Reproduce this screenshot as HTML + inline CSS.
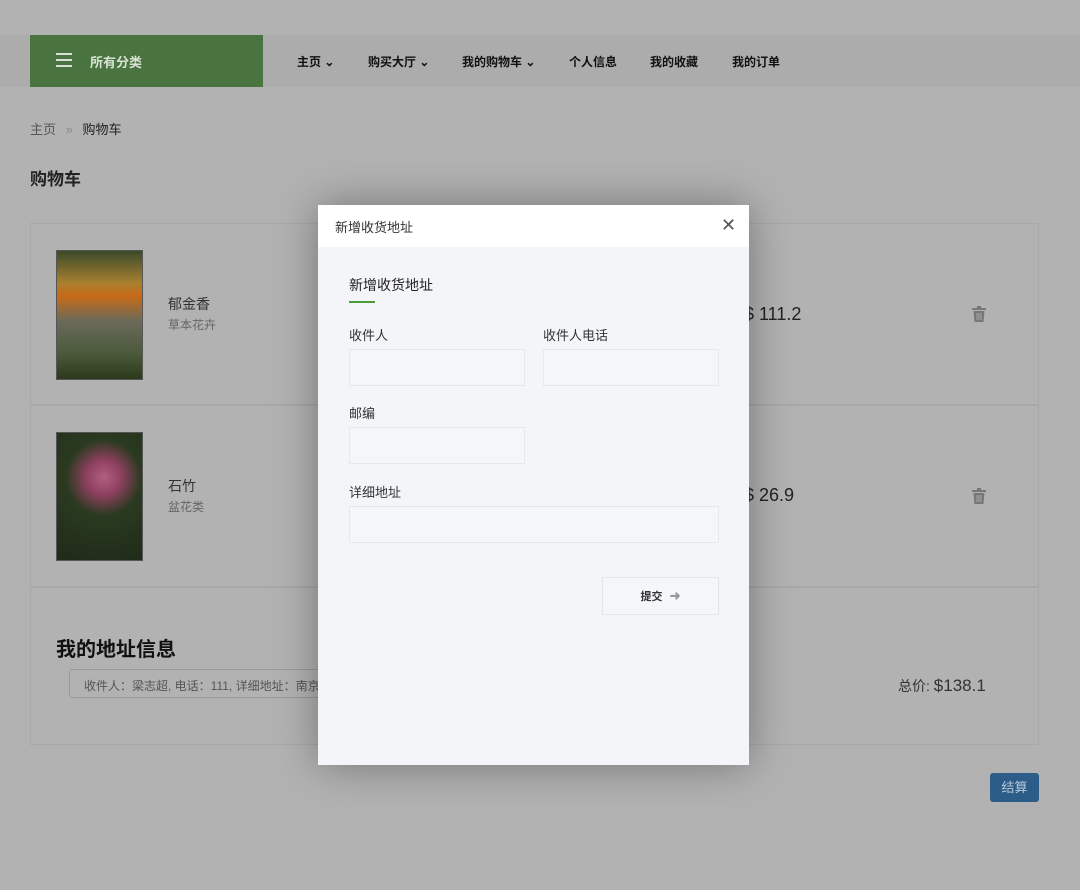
<!DOCTYPE html>
<html><head><meta charset="utf-8"><style>
*{box-sizing:border-box;margin:0;padding:0}
body{width:1080px;height:890px;background:#b2b2b2;font-family:"Liberation Sans","Noto Sans CJK SC",sans-serif;position:relative;overflow:hidden;color:#222}
.a{position:absolute}
.nav{left:0;top:35px;width:1080px;height:52px;background:#acacac}
.cat{left:30px;top:35px;width:233px;height:52px;background:#4a743f;color:#d8e2d4;font-weight:bold;font-size:13px}
.nav span{position:absolute;top:18px;font-size:12px;font-weight:bold;color:#111}
.card{border:1px solid #a8a8a8;left:30px;width:1009px}
.img{width:87px;height:130px;left:56px;border:1px solid #555}
.price{font-size:18px;color:#222}
.m{left:318px;top:205px;width:431px;height:560px;background:#f3f5f9;box-shadow:0 0 40px rgba(0,0,0,.35)}
.mh{left:0;top:0;width:431px;height:42px;background:#fff;font-size:13px;color:#333;padding:12px 17px}
.lab{font-size:13px;color:#333}
.inp{background:#f4f6fa;border:1px solid #e6e8ec;height:37px}
</style></head><body>
<div class="a nav">
<span style="left:297px">主页 ⌄</span><span style="left:368px">购买大厅 ⌄</span><span style="left:462px">我的购物车 ⌄</span><span style="left:569px">个人信息</span><span style="left:650px">我的收藏</span><span style="left:732px">我的订单</span>
</div>
<div class="a cat"><div class="a" style="left:26px;top:18px;width:16px;height:14px;border-top:2px solid #d8e2d4;border-bottom:2px solid #d8e2d4"><div style="margin-top:4px;height:2px;background:#d8e2d4;width:16px"></div></div><div class="a" style="left:60px;top:17px">所有分类</div></div>
<div class="a" style="left:30px;top:119px;font-size:13px;color:#555">主页 <span style="color:#888;margin:0 6px">»</span> <span style="color:#222">购物车</span></div>
<div class="a" style="left:30px;top:165px;font-size:17px;font-weight:bold;color:#222">购物车</div>
<div class="a card" style="top:223px;height:182px"></div>
<div class="a card" style="top:405px;height:182px"></div>
<div class="a card" style="top:587px;height:158px"></div>
<div class="a img" style="top:250px;background:linear-gradient(180deg,#3a4a2a 0%,#a88030 25%,#c86a18 35%,#6a6a5a 55%,#4a5a3a 80%,#2a3a1a 100%)"></div>
<div class="a img" style="top:432px;height:129px;background:radial-gradient(circle at 55% 35%,#b06080 0,#904060 18%,#2a3a20 40%,#1e2a18 100%)"></div>
<div class="a" style="left:168px;top:294px;font-size:14px;color:#333">郁金香</div>
<div class="a" style="left:168px;top:316px;font-size:12px;color:#666">草本花卉</div>
<div class="a" style="left:168px;top:476px;font-size:14px;color:#333">石竹</div>
<div class="a" style="left:168px;top:498px;font-size:12px;color:#666">盆花类</div>
<div class="a price" style="left:744px;top:304px">$ 111.2</div>
<div class="a price" style="left:744px;top:485px">$ 26.9</div>
<svg class="a" style="left:972px;top:306px" width="14" height="16" viewBox="0 0 14 16"><rect x="0" y="2" width="14" height="2" fill="#777"/><rect x="5" y="0" width="4" height="2" fill="#777"/><path d="M1.5 5h11l-1 11h-9z" fill="#777"/><path d="M5 7v7M7 7v7M9 7v7" stroke="#aaa" stroke-width="1"/></svg>
<svg class="a" style="left:972px;top:488px" width="14" height="16" viewBox="0 0 14 16"><rect x="0" y="2" width="14" height="2" fill="#777"/><rect x="5" y="0" width="4" height="2" fill="#777"/><path d="M1.5 5h11l-1 11h-9z" fill="#777"/><path d="M5 7v7M7 7v7M9 7v7" stroke="#aaa" stroke-width="1"/></svg>
<div class="a" style="left:56px;top:633px;font-size:20px;font-weight:bold;color:#111">我的地址信息</div>
<div class="a" style="left:69px;top:669px;width:260px;height:29px;border:1px solid #999;border-radius:3px;font-size:12px;color:#555;padding:7px 14px;white-space:nowrap;overflow:hidden">收件人：梁志超, 电话：111, 详细地址：南京</div>
<div class="a" style="left:898px;top:676px;font-size:14px;color:#333">总价: <span style="font-size:17px">$138.1</span></div>
<div class="a" style="left:990px;top:773px;width:49px;height:29px;background:#2c5c88;border-radius:3px;color:#b8c8d8;font-size:13px;text-align:center;line-height:29px">结算</div>
<div class="a m">
<div class="a mh">新增收货地址</div>
<div class="a" style="left:403px;top:12px;font-size:18px;color:#555;line-height:16px">✕</div>
<div class="a" style="left:31px;top:70px;font-size:14px;color:#222">新增收货地址</div>
<div class="a" style="left:31px;top:96px;width:26px;height:2px;background:#4a9a3a"></div>
<div class="a lab" style="left:31px;top:120px">收件人</div>
<div class="a lab" style="left:225px;top:120px">收件人电话</div>
<div class="a inp" style="left:31px;top:144px;width:176px"></div>
<div class="a inp" style="left:225px;top:144px;width:176px"></div>
<div class="a lab" style="left:31px;top:198px">邮编</div>
<div class="a inp" style="left:31px;top:222px;width:176px"></div>
<div class="a lab" style="left:31px;top:277px">详细地址</div>
<div class="a inp" style="left:31px;top:301px;width:370px"></div>
<div class="a" style="left:284px;top:372px;width:117px;height:38px;border:1px solid #e3e5e9;background:#f4f6fa;font-size:11px;font-weight:bold;color:#333;text-align:center;line-height:36px">提交 <span style="color:#999;font-size:13px;margin-left:4px">➜</span></div>
</div>
</body></html>
